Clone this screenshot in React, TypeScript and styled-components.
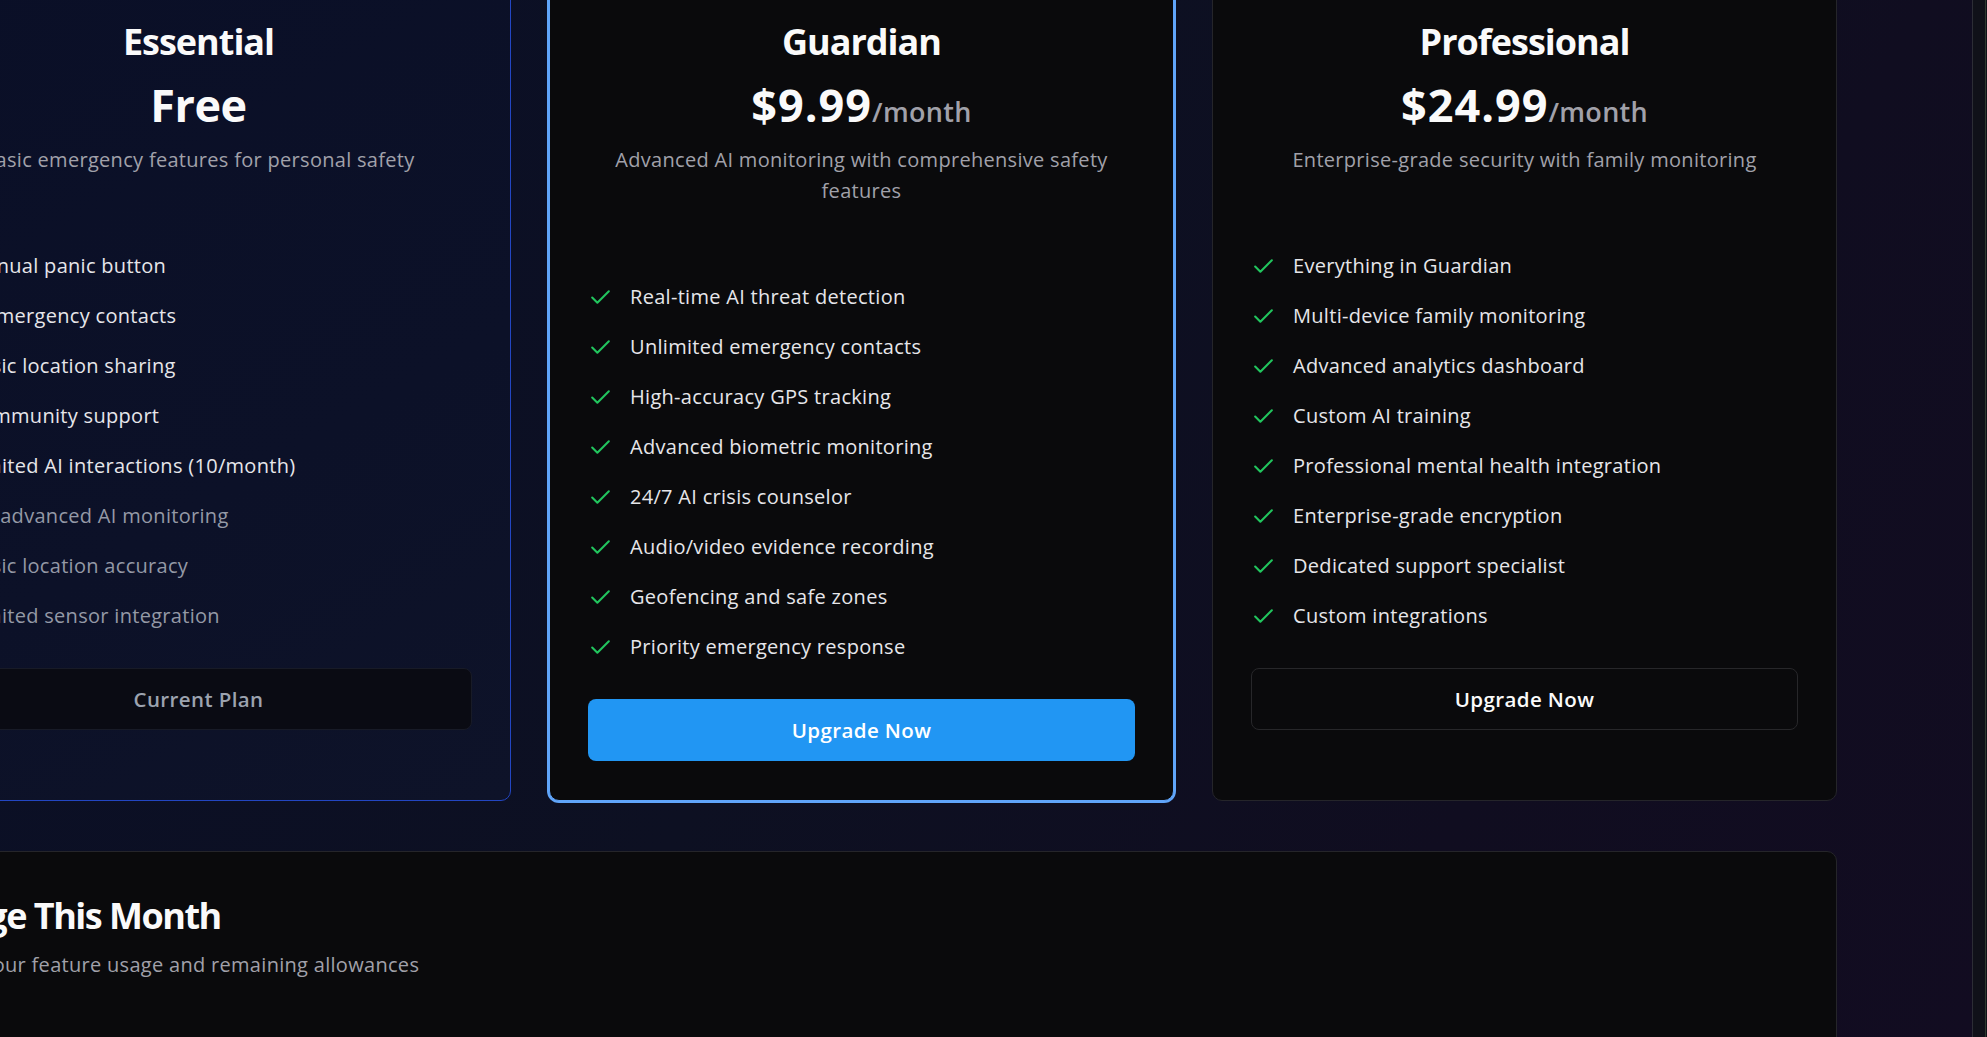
import React from "react";
import styled, { createGlobalStyle, css } from "styled-components";
import { Check, X } from "lucide-react";

const GlobalStyle = createGlobalStyle`
  html, body {
    margin: 0;
    padding: 0;
    background: #0d0f1e;
    overflow: hidden;
  }
  * { box-sizing: border-box; }
  body {
    font-family: "Segoe UI", "Open Sans", "Noto Sans", sans-serif;
    -webkit-font-smoothing: antialiased;
  }
`;

const Page = styled.div`
  display: flex;
  width: 100vw;
  height: 100vh;
  overflow: hidden;
`;

const Main = styled.main`
  flex: 1;
  min-width: 0;
  overflow: hidden;
  background: linear-gradient(120deg, #0a0f27 0%, #0d1022 45%, #100d20 75%, #120c21 100%);
`;

const ScrollTrack = styled.div`
  width: 15px;
  flex: 0 0 15px;
  background: #101119;
  border-left: 1px solid #2c2d35;
  display: flex;
  justify-content: flex-end;
`;

const TrackEdge = styled.div`
  width: 1px;
  margin-right: 1px;
  background: #2d3a2f;
`;

const Content = styled.div`
  width: 1951px;
  margin-left: -114px;
  margin-top: -20px;
  display: flex;
  flex-direction: column;
  gap: 50px;
`;

const PlanGrid = styled.div`
  display: grid;
  grid-template-columns: repeat(3, 625px);
  gap: 38px;
  align-items: stretch;
`;

type Variant = "basic" | "featured" | "pro";

const Card = styled.div<{ $variant: Variant }>`
  display: flex;
  flex-direction: column;
  padding: 38px 38px 39px;
  border-radius: 10px;
  border: 1px solid #25252a;
  background: #0a0a0c;
  ${(p) =>
    p.$variant === "basic" &&
    css`
      border-color: #2346c2;
      background: linear-gradient(150deg, #0a0f27 0%, #0c1128 60%, #0e1329 100%);
    `}
  ${(p) =>
    p.$variant === "featured" &&
    css`
      border-color: #60a5fa;
      box-shadow: 0 0 0 2px #60a5fa;
    `}
`;

const Header = styled.div`
  display: flex;
  flex-direction: column;
  align-items: center;
  text-align: center;
`;

const PlanName = styled.h3`
  margin: 0;
  font-size: 36px;
  line-height: 45px;
  font-weight: 700;
  color: #fafafa;
  letter-spacing: -1px;
`;

const PriceRow = styled.div`
  margin-top: 16px;
  height: 50px;
  display: flex;
  align-items: baseline;
  justify-content: center;
`;

const Price = styled.span<{ $word?: boolean }>`
  font-size: 45px;
  line-height: 50px;
  font-weight: 700;
  color: #fafafa;
  letter-spacing: ${(p) => (p.$word ? "-0.5px" : "1px")};
`;

const Period = styled.span`
  font-size: 27px;
  font-weight: 600;
  color: #a1a1aa;
  letter-spacing: 0.3px;
`;

const Description = styled.p`
  margin: 14px 0 0;
  font-size: 20px;
  line-height: 31px;
  color: #a1a1aa;
  letter-spacing: 0.3px;
`;

const FeatureList = styled.ul`
  list-style: none;
  margin: 76px 0 0;
  padding: 0;
  display: flex;
  flex-direction: column;
  gap: 20px;
`;

const Feature = styled.li<{ $off?: boolean }>`
  display: flex;
  align-items: center;
  gap: 17px;
  font-size: 20px;
  line-height: 30px;
  letter-spacing: 0.3px;
  color: ${(p) => (p.$off ? "#9499a6" : "#e6e6ea")};
`;

const IconBox = styled.span<{ $off?: boolean }>`
  display: inline-flex;
  flex: 0 0 25px;
  color: ${(p) => (p.$off ? "#6b7280" : "#22c55e")};
`;

const PlanButton = styled.button<{ $kind: "current" | "primary" | "outline" }>`
  margin-top: 37px;
  height: 62px;
  width: 100%;
  border-radius: 8px;
  font-family: inherit;
  font-size: 20.5px;
  font-weight: 600;
  letter-spacing: 0.4px;
  cursor: pointer;
  ${(p) =>
    p.$kind === "current" &&
    css`
      background: #0a0b13;
      border: 1px solid #181b27;
      color: #9ca3af;
    `}
  ${(p) =>
    p.$kind === "primary" &&
    css`
      background: #2196f3;
      border: none;
      color: #ffffff;
    `}
  ${(p) =>
    p.$kind === "outline" &&
    css`
      background: #0a0a0c;
      border: 1px solid #27272a;
      color: #fafafa;
    `}
`;

const UsageCard = styled.section`
  min-height: 320px;
  border-radius: 10px;
  border: 1px solid #25252a;
  background: #0a0a0c;
  padding: 41px 38px 40px;
`;

const UsageTitle = styled.h2`
  margin: 0;
  font-size: 36px;
  line-height: 45px;
  font-weight: 700;
  color: #fafafa;
  letter-spacing: -1.5px;
`;

const UsageSubtitle = styled.p`
  margin: 12px 0 0;
  font-size: 20px;
  line-height: 30px;
  color: #a1a1aa;
  letter-spacing: 0.3px;
`;

type FeatureItem = { text: string; off?: boolean };

type Plan = {
  name: string;
  price: string;
  period?: string;
  description: string;
  variant: Variant;
  button: { label: string; kind: "current" | "primary" | "outline" };
  features: FeatureItem[];
};

const plans: Plan[] = [
  {
    name: "Essential",
    price: "Free",
    description: "Basic emergency features for personal safety",
    variant: "basic",
    button: { label: "Current Plan", kind: "current" },
    features: [
      { text: "Manual panic button" },
      { text: "3 emergency contacts" },
      { text: "Basic location sharing" },
      { text: "Community support" },
      { text: "Limited AI interactions (10/month)" },
      { text: "No advanced AI monitoring", off: true },
      { text: "Basic location accuracy", off: true },
      { text: "Limited sensor integration", off: true },
    ],
  },
  {
    name: "Guardian",
    price: "$9.99",
    period: "/month",
    description: "Advanced AI monitoring with comprehensive safety features",
    variant: "featured",
    button: { label: "Upgrade Now", kind: "primary" },
    features: [
      { text: "Real-time AI threat detection" },
      { text: "Unlimited emergency contacts" },
      { text: "High-accuracy GPS tracking" },
      { text: "Advanced biometric monitoring" },
      { text: "24/7 AI crisis counselor" },
      { text: "Audio/video evidence recording" },
      { text: "Geofencing and safe zones" },
      { text: "Priority emergency response" },
    ],
  },
  {
    name: "Professional",
    price: "$24.99",
    period: "/month",
    description: "Enterprise-grade security with family monitoring",
    variant: "pro",
    button: { label: "Upgrade Now", kind: "outline" },
    features: [
      { text: "Everything in Guardian" },
      { text: "Multi-device family monitoring" },
      { text: "Advanced analytics dashboard" },
      { text: "Custom AI training" },
      { text: "Professional mental health integration" },
      { text: "Enterprise-grade encryption" },
      { text: "Dedicated support specialist" },
      { text: "Custom integrations" },
    ],
  },
];

function PlanCard({ plan }: { plan: Plan }) {
  return (
    <Card $variant={plan.variant}>
      <Header>
        <PlanName>{plan.name}</PlanName>
        <PriceRow>
          <Price $word={!plan.period}>{plan.price}</Price>
          {plan.period && <Period>{plan.period}</Period>}
        </PriceRow>
        <Description>{plan.description}</Description>
      </Header>
      <FeatureList>
        {plan.features.map((f) => (
          <Feature key={f.text} $off={f.off}>
            <IconBox $off={f.off}>
              {f.off ? <X size={25} strokeWidth={2} /> : <Check size={25} strokeWidth={2} />}
            </IconBox>
            {f.text}
          </Feature>
        ))}
      </FeatureList>
      <PlanButton $kind={plan.button.kind}>{plan.button.label}</PlanButton>
    </Card>
  );
}

export default function App() {
  return (
    <>
      <GlobalStyle />
      <Page>
        <Main>
          <Content>
            <PlanGrid>
              {plans.map((p) => (
                <PlanCard key={p.name} plan={p} />
              ))}
            </PlanGrid>
            <UsageCard>
              <UsageTitle>Usage This Month</UsageTitle>
              <UsageSubtitle>Track your feature usage and remaining allowances</UsageSubtitle>
            </UsageCard>
          </Content>
        </Main>
        <ScrollTrack>
          <TrackEdge />
        </ScrollTrack>
      </Page>
    </>
  );
}
